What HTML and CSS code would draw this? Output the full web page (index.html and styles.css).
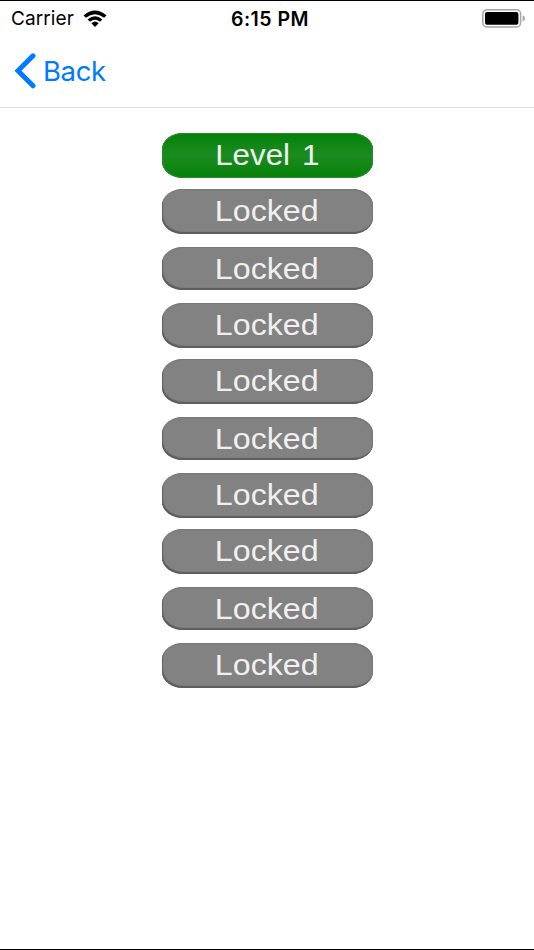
FILE: index.html
```
<!DOCTYPE html>
<html lang="en">
<head>
    <meta charset="UTF-8">
    <title>Levels</title>
    <link rel="stylesheet" href="styles.css">
</head>
<body>
    <div class="screen">
        <header class="status-bar">
            <div class="status-left">
                <span class="carrier">Carrier</span>
                <svg class="wifi" width="24" height="18" viewBox="0 0 24 18">
                    <path d="M0.5 5.4 Q12 -4.4 23.5 5.4 L21.1 7.8 Q12 0.6 2.9 7.8 Z"/>
                    <path d="M4.6 9.4 Q12 3.2 19.4 9.4 L17 11.8 Q12 7.8 7 11.8 Z"/>
                    <path d="M8.3 13.2 Q12 10 15.7 13.2 L12 16.9 Z"/>
                </svg>
            </div>
            <span class="clock">6:15 PM</span>
            <svg class="battery" width="44" height="20" viewBox="0 0 44 20">
                <rect class="battery-case" x="0.8" y="0.8" width="37.8" height="17.2" rx="4"/>
                <rect x="3" y="3" width="33.4" height="12.8" rx="2"/>
                <path class="battery-tip" d="M40.6 6.2 Q43 7 43 9.4 Q43 11.8 40.6 12.6 Z"/>
            </svg>
        </header>

        <nav class="nav-bar">
            <a class="back" href="#">
                <svg class="chevron" width="22" height="36" viewBox="0 0 22 36">
                    <path d="M19 2.8 L4 17.8 L19 32.8"/>
                </svg>
                <span class="back-label">Back</span>
            </a>
        </nav>

        <main class="levels">
            <button class="level open"><span>Level 1</span></button>
            <button class="level"><span>Locked</span></button>
            <button class="level short"><span>Locked</span></button>
            <button class="level"><span>Locked</span></button>
            <button class="level"><span>Locked</span></button>
            <button class="level short"><span>Locked</span></button>
            <button class="level"><span>Locked</span></button>
            <button class="level"><span>Locked</span></button>
            <button class="level short"><span>Locked</span></button>
            <button class="level"><span>Locked</span></button>
        </main>
    </div>
</body>
</html>
```
FILE: styles.css
```
body {
    margin: 0;
    background-color: #fff;
    font-family: Inter, "Liberation Sans", sans-serif;
}

.screen {
    box-sizing: border-box;
    width: 534px;
    height: 950px;
    border-top: 1px solid #000;
    border-bottom: 1px solid #000;
    overflow: hidden;
}

.status-bar {
    display: grid;
    grid-template-columns: 1fr auto 1fr;
    align-items: center;
    height: 35px;
    padding: 0 8px 0 11px;
}

.status-left {
    display: flex;
    align-items: center;
    gap: 9px;
}

.carrier {
    font-size: 19px;
    letter-spacing: 0.1px;
}

.clock {
    font-size: 19.5px;
    font-weight: 600;
    letter-spacing: 0.5px;
    margin-left: 3px;
}

.battery {
    justify-self: end;
}

.battery-case {
    fill: none;
    stroke: #a5a5a5;
    stroke-width: 1.5;
}

.battery-tip {
    fill: #a5a5a5;
}

.nav-bar {
    display: flex;
    align-items: center;
    box-sizing: border-box;
    height: 72px;
    padding: 0 0 2px 14px;
    border-bottom: 1px solid #e2e2e2;
}

.back {
    display: flex;
    align-items: center;
    gap: 7px;
    color: #007aff;
    text-decoration: none;
}

.chevron path {
    fill: none;
    stroke: #007aff;
    stroke-width: 5;
    stroke-linecap: round;
}

.back-label {
    font-size: 27.5px;
    letter-spacing: -0.4px;
}

.levels {
    display: flex;
    flex-direction: column;
    align-items: center;
    gap: 11.5px;
    padding-top: 25px;
}

.level {
    display: flex;
    justify-content: center;
    align-items: center;
    box-sizing: border-box;
    width: 211px;
    height: 44.5px;
    padding: 0;
    border: none;
    border-radius: 21px / 16px;
    background-color: #828282;
    box-shadow: inset 1px -2px 1px #5c5c5c, inset -1px 1px 1px #777;
    color: #f0f0f0;
    font-family: "Liberation Sans", Arial, sans-serif;
    font-size: 29px;
    line-height: 42px;
}

.level.short {
    height: 43px;
    margin: 2px 0 1.5px;
}

.level span {
    transform: scaleX(1.11);
}

.level.open {
    background: linear-gradient(#058009, #1b8c1f 50%, #058009);
    box-shadow: inset 0 0 1px 1px #2b8a2e;
    word-spacing: 3px;
}

.level.open span {
    transform: scaleX(1.08);
}
```
